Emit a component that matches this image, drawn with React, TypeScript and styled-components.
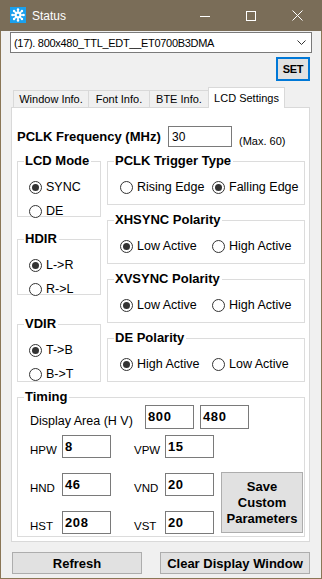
import React from 'react';
import styled, { createGlobalStyle } from 'styled-components';

type Option = { label: string; checked?: boolean };
type SideGroup = { title: string; h: number; mt: number; options: Option[] };
type PolarityGroup = { title: string; options: Option[] };

const sideGroups: SideGroup[] = [
  { title: 'LCD Mode', h: 56, mt: 0, options: [{ label: 'SYNC', checked: true }, { label: 'DE' }] },
  { title: 'HDIR', h: 56, mt: 22, options: [{ label: 'L->R', checked: true }, { label: 'R->L' }] },
  { title: 'VDIR', h: 58, mt: 29, options: [{ label: 'T->B', checked: true }, { label: 'B->T' }] },
];

const polarityGroups: PolarityGroup[] = [
  { title: 'PCLK Trigger Type', options: [{ label: 'Rising Edge' }, { label: 'Falling Edge', checked: true }] },
  { title: 'XHSYNC Polarity', options: [{ label: 'Low Active', checked: true }, { label: 'High Active' }] },
  { title: 'XVSYNC Polarity', options: [{ label: 'Low Active', checked: true }, { label: 'High Active' }] },
  { title: 'DE Polarity', options: [{ label: 'High Active', checked: true }, { label: 'Low Active' }] },
];

const tabs = [
  { title: 'Window Info.', w: 76 },
  { title: 'Font Info.', w: 62 },
  { title: 'BTE Info.', w: 60 },
  { title: 'LCD Settings', w: 77, active: true },
];

export default function App() {
  return (
    <>
      <GlobalStyle />
      <Window>
        <TitleBar>
          <AppIcon />
          <Title>Status</Title>
          <Caption>
            <CaptionButton>
              <svg width="10" height="10" viewBox="0 0 10 10">
                <line x1="0" y1="5.5" x2="10" y2="5.5" stroke="#fff" strokeWidth="1" />
              </svg>
            </CaptionButton>
            <CaptionButton>
              <svg width="10" height="10" viewBox="0 0 10 10">
                <rect x="0.5" y="0.5" width="9" height="9" fill="none" stroke="#fff" strokeWidth="1" />
              </svg>
            </CaptionButton>
            <CaptionButton>
              <svg width="11" height="11" viewBox="0 0 11 11">
                <path d="M0.5 0.5 L10.5 10.5 M10.5 0.5 L0.5 10.5" stroke="#fff" strokeWidth="1" />
              </svg>
            </CaptionButton>
          </Caption>
        </TitleBar>

        <Body>
          <Combo>
            <span>(17). 800x480_TTL_EDT__ET0700B3DMA</span>
            <svg width="9" height="5" viewBox="0 0 9 5">
              <polyline points="0.5,0.5 4.5,4.5 8.5,0.5" fill="none" stroke="#333" strokeWidth="1" />
            </svg>
          </Combo>
          <SetRow>
            <SetButton>SET</SetButton>
          </SetRow>

          <TabStrip>
            {tabs.map((t) => (
              <Tab key={t.title} $w={t.w} $active={t.active}>
                {t.title}
              </Tab>
            ))}
          </TabStrip>

          <Panel>
            <FreqRow>
              <BoldLabel>PCLK Frequency (MHz)</BoldLabel>
              <FreqInput>30</FreqInput>
              <MaxNote>(Max. 60)</MaxNote>
            </FreqRow>

            <Columns>
              <LeftColumn>
                {sideGroups.map((g) => (
                  <Group key={g.title} $h={g.h} $mt={g.mt}>
                    <Legend>{g.title}</Legend>
                    <StackedOptions>
                      {g.options.map((o) => (
                        <Radio key={o.label} {...o} />
                      ))}
                    </StackedOptions>
                  </Group>
                ))}
              </LeftColumn>
              <RightColumn>
                {polarityGroups.map((g) => (
                  <Group key={g.title} $h={44}>
                    <Legend>{g.title}</Legend>
                    <InlineOptions>
                      {g.options.map((o) => (
                        <Radio key={o.label} {...o} $w={92} />
                      ))}
                    </InlineOptions>
                  </Group>
                ))}
              </RightColumn>
            </Columns>

            <Group $h={140} $mt={15}>
              <Legend>Timing</Legend>
              <DisplayRow>
                <DisplayLabel>Display Area (H V)</DisplayLabel>
                <NumBox $h={24}>800</NumBox>
                <NumBox $h={24}>480</NumBox>
              </DisplayRow>
              <TimingGrid>
                <FieldLabel>HPW</FieldLabel>
                <NumBox>8</NumBox>
                <span />
                <FieldLabel>VPW</FieldLabel>
                <NumBox>15</NumBox>
                <span />
                <span />

                <FieldLabel>HND</FieldLabel>
                <NumBox>46</NumBox>
                <span />
                <FieldLabel>VND</FieldLabel>
                <NumBox>20</NumBox>
                <span />
                <SaveButton>
                  Save
                  <br />
                  Custom
                  <br />
                  Parameters
                </SaveButton>

                <FieldLabel>HST</FieldLabel>
                <NumBox>208</NumBox>
                <span />
                <FieldLabel>VST</FieldLabel>
                <NumBox>20</NumBox>
              </TimingGrid>
            </Group>
          </Panel>

          <BottomBar>
            <WideButton $w={130}>Refresh</WideButton>
            <WideButton $w={150}>Clear Display Window</WideButton>
          </BottomBar>
        </Body>
      </Window>
    </>
  );
}

function Radio({ label, checked, $w }: Option & { $w?: number }) {
  return (
    <RadioLabel $w={$w}>
      <RadioDot $on={checked} />
      {label}
    </RadioLabel>
  );
}

function AppIcon() {
  const spokes = [0, 45, 90, 135, 180, 225, 270, 315];
  return (
    <IconBox>
      <svg width="16" height="16" viewBox="0 0 16 16">
        <rect width="16" height="16" fill="#1ba1ee" />
        {spokes.map((a) => {
          const r = (a * Math.PI) / 180;
          const x = 8 + Math.cos(r) * 5.6;
          const y = 8 + Math.sin(r) * 5.6;
          return (
            <g key={a}>
              <line x1="8" y1="8" x2={x} y2={y} stroke="#fff" strokeWidth="1.6" />
              <circle cx={x} cy={y} r="1.2" fill="#fff" />
            </g>
          );
        })}
        <circle cx="8" cy="8" r="3.4" fill="#fff" />
        <circle cx="8" cy="8" r="1.3" fill="#1ba1ee" />
      </svg>
    </IconBox>
  );
}

const GlobalStyle = createGlobalStyle`
  html, body {
    margin: 0;
    padding: 0;
    background: #f0f0f0;
  }
  body {
    font-family: "Liberation Sans", Arial, sans-serif;
    color: #000;
  }
`;

const Window = styled.div`
  width: 322px;
  height: 579px;
  display: flex;
  flex-direction: column;
  background: #f0f0f0;
`;

const TitleBar = styled.div`
  height: 31px;
  flex: none;
  display: flex;
  align-items: center;
  background: #7a6d58;
  color: #fff;
`;

const IconBox = styled.div`
  width: 16px;
  height: 16px;
  margin: -1px 0 0 10px;
  display: flex;
`;

const Title = styled.div`
  margin-left: 6px;
  font-size: 12px;
  flex: 1;
`;

const Caption = styled.div`
  display: flex;
  margin-right: 2px;
`;

const CaptionButton = styled.div`
  width: 46px;
  height: 31px;
  display: flex;
  align-items: center;
  justify-content: center;
`;

const Body = styled.div`
  flex: 1;
  display: flex;
  flex-direction: column;
  padding: 1px 9px 0;
  border: 1px solid #8a7656;
  border-top: none;
`;

const Combo = styled.div`
  height: 21px;
  box-sizing: border-box;
  border: 1px solid #7a7a7a;
  background: #fff;
  display: flex;
  align-items: center;
  justify-content: space-between;
  padding: 0 5px 0 3px;
  font-size: 11px;
  letter-spacing: -0.3px;
`;

const SetRow = styled.div`
  display: flex;
  justify-content: flex-end;
  margin: 4px 2px 0 0;
`;

const SetButton = styled.div`
  width: 34px;
  height: 24px;
  box-sizing: border-box;
  border: 2px solid #0078d7;
  background: #e1e1e1;
  display: flex;
  align-items: center;
  justify-content: center;
  font-weight: bold;
  font-size: 11px;
  letter-spacing: -0.3px;
`;

const TabStrip = styled.div`
  height: 20px;
  margin: 6px 2px 0 1px;
  padding-left: 2px;
  display: flex;
  align-items: flex-end;
`;

const Tab = styled.div<{ $w: number; $active?: boolean }>`
  width: ${(p) => p.$w}px;
  height: ${(p) => (p.$active ? 21 : 17)}px;
  margin-bottom: ${(p) => (p.$active ? -1 : 0)}px;
  box-sizing: border-box;
  border: 1px solid #d9d9d9;
  border-bottom: none;
  background: ${(p) => (p.$active ? '#fff' : '#f0f0f0')};
  position: relative;
  z-index: ${(p) => (p.$active ? 1 : 0)};
  & + & {
    margin-left: -1px;
  }
  display: flex;
  align-items: center;
  justify-content: center;
  font-size: 11px;
`;

const Panel = styled.div`
  height: 435px;
  box-sizing: border-box;
  margin: 0 2px 0 1px;
  border: 1px solid #d9d9d9;
  background: #fff;
  padding: 18px 4px 4px 5px;
  display: flex;
  flex-direction: column;
`;

const FreqRow = styled.div`
  display: flex;
  align-items: center;
  height: 21px;
`;

const BoldLabel = styled.div`
  font-weight: bold;
  font-size: 13px;
  width: 151px;
`;

const FreqInput = styled.div`
  width: 64px;
  height: 21px;
  box-sizing: border-box;
  border: 1px solid #7a7a7a;
  padding-left: 3px;
  display: flex;
  align-items: center;
  font-size: 12px;
`;

const MaxNote = styled.div`
  margin: 8px 0 0 7px;
  font-size: 11px;
`;

const Columns = styled.div`
  display: flex;
  gap: 6px;
  margin-top: 14px;
`;

const LeftColumn = styled.div`
  width: 84px;
  display: flex;
  flex-direction: column;
`;

const RightColumn = styled.div`
  width: 198px;
  display: flex;
  flex-direction: column;
  gap: 15px;
`;

const Group = styled.div<{ $h: number; $mt?: number }>`
  box-sizing: border-box;
  height: ${(p) => p.$h}px;
  margin-top: ${(p) => p.$mt ?? 0}px;
  border: 1px solid #dcdcdc;
  flex: none;
`;

const Legend = styled.div`
  width: fit-content;
  margin: -9px 0 0 6px;
  padding: 0 2px 0 1px;
  background: #fff;
  font-weight: bold;
  font-size: 13px;
  line-height: 16px;
`;

const StackedOptions = styled.div`
  display: flex;
  flex-direction: column;
  gap: 8px;
  padding: 10px 0 0 11px;
`;

const InlineOptions = styled.div`
  display: flex;
  padding: 10px 0 0 12px;
`;

const RadioLabel = styled.label<{ $w?: number }>`
  display: flex;
  align-items: center;
  gap: 4px;
  height: 16px;
  width: ${(p) => (p.$w ? `${p.$w}px` : 'auto')};
  font-size: 12.5px;
  white-space: nowrap;
`;

const RadioDot = styled.span<{ $on?: boolean }>`
  width: 13px;
  height: 13px;
  box-sizing: border-box;
  border: 1px solid #333;
  border-radius: 50%;
  background: #fff;
  flex: none;
  display: flex;
  align-items: center;
  justify-content: center;

  &::after {
    content: '';
    width: 7px;
    height: 7px;
    border-radius: 50%;
    background: #333;
    display: ${(p) => (p.$on ? 'block' : 'none')};
  }
`;

const DisplayRow = styled.div`
  display: flex;
  align-items: flex-end;
  gap: 6px;
  padding-left: 12px;
`;

const DisplayLabel = styled.div`
  width: 109px;
  font-size: 12.5px;
  padding-bottom: 1px;
`;

const NumBox = styled.div<{ $h?: number }>`
  width: 49px;
  height: ${(p) => p.$h ?? 23}px;
  box-sizing: border-box;
  border: 1px solid #7a7a7a;
  background: #fff;
  padding: 0 0 1px 2px;
  display: flex;
  align-items: center;
  font-weight: bold;
  font-size: 13px;
  letter-spacing: 0.6px;
`;

const TimingGrid = styled.div`
  display: grid;
  grid-template-columns: 32px 49px 23px 31px 49px 7px 82px;
  grid-template-rows: 23px 23px 23px;
  row-gap: 15px;
  margin-top: 6px;
  padding-left: 12px;
`;

const FieldLabel = styled.div`
  align-self: end;
  font-size: 11.5px;
  line-height: 13px;
  padding-bottom: 1px;
`;

const SaveButton = styled.div`
  grid-column: 7;
  grid-row: 2 / span 2;
  margin-top: -1px;
  height: 61px;
  box-sizing: border-box;
  border: 1px solid #adadad;
  background: #e1e1e1;
  display: flex;
  align-items: center;
  justify-content: center;
  text-align: center;
  font-weight: bold;
  font-size: 13px;
  line-height: 16px;
`;

const BottomBar = styled.div`
  display: flex;
  justify-content: space-between;
  margin: 10px 2px 0 2px;
`;

const WideButton = styled.div<{ $w: number }>`
  width: ${(p) => p.$w}px;
  height: 22px;
  box-sizing: border-box;
  border: 1px solid #adadad;
  background: #e1e1e1;
  display: flex;
  align-items: center;
  justify-content: center;
  font-weight: bold;
  font-size: 13px;
`;
